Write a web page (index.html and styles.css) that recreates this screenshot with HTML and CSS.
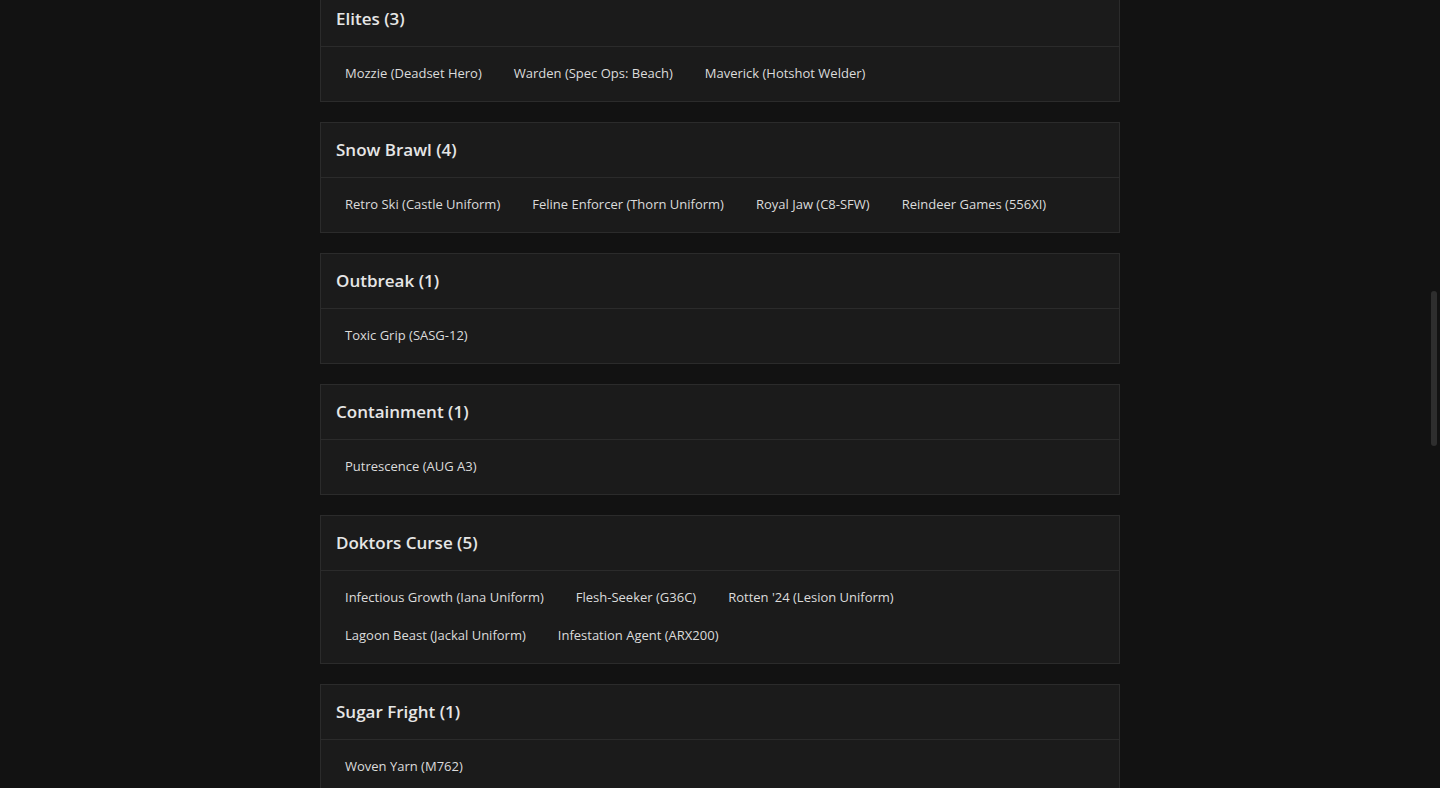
FILE: index.html
```html
<!DOCTYPE html>
<html lang="en">
<head>
<meta charset="utf-8">
<title>Events</title>
<link rel="stylesheet" href="styles.css">
</head>
<body>
<main class="list">
  <section class="card">
    <h2 class="card-title">Elites (3)</h2>
    <div class="card-body">
      <span class="item">Mozzie (Deadset Hero)</span>
      <span class="item">Warden (Spec Ops: Beach)</span>
      <span class="item">Maverick (Hotshot Welder)</span>
    </div>
  </section>
  <section class="card">
    <h2 class="card-title">Snow Brawl (4)</h2>
    <div class="card-body">
      <span class="item">Retro Ski (Castle Uniform)</span>
      <span class="item">Feline Enforcer (Thorn Uniform)</span>
      <span class="item">Royal Jaw (C8-SFW)</span>
      <span class="item">Reindeer Games (556XI)</span>
    </div>
  </section>
  <section class="card">
    <h2 class="card-title">Outbreak (1)</h2>
    <div class="card-body">
      <span class="item">Toxic Grip (SASG-12)</span>
    </div>
  </section>
  <section class="card">
    <h2 class="card-title">Containment (1)</h2>
    <div class="card-body">
      <span class="item">Putrescence (AUG A3)</span>
    </div>
  </section>
  <section class="card">
    <h2 class="card-title">Doktors Curse (5)</h2>
    <div class="card-body">
      <span class="item">Infectious Growth (Iana Uniform)</span>
      <span class="item">Flesh-Seeker (G36C)</span>
      <span class="item">Rotten '24 (Lesion Uniform)</span>
      <span class="item">Lagoon Beast (Jackal Uniform)</span>
      <span class="item">Infestation Agent (ARX200)</span>
    </div>
  </section>
  <section class="card">
    <h2 class="card-title">Sugar Fright (1)</h2>
    <div class="card-body">
      <span class="item">Woven Yarn (M762)</span>
    </div>
  </section>
</main>
<div class="scroll-thumb"></div>
</body>
</html>
```
FILE: styles.css
```css
html, body {
  margin: 0;
  padding: 0;
  background: #121212;
  height: 100%;
  overflow: hidden;
}
body {
  font-family: "Open Sans", "Liberation Sans", sans-serif;
  color: #e4e4e4;
}
.list {
  width: 800px;
  margin: -9px auto 0;
  display: flex;
  flex-direction: column;
  gap: 20px;
}
.card {
  background: #1b1b1b;
  border: 1px solid #2b2b2b;
}
.card-title {
  margin: 0;
  padding: 16px 15px;
  font-size: 17px;
  line-height: 22px;
  font-weight: 600;
  color: #e6e6e6;
  border-bottom: 1px solid #2b2b2b;
}
.card-body {
  display: flex;
  flex-wrap: wrap;
  column-gap: 16px;
  padding: 8px 16px;
}
.item {
  height: 36px;
  line-height: 36px;
  padding: 0 8px 2px;
  font-size: 13px;
  color: #dcdcdc;
}
.scroll-thumb {
  position: fixed;
  right: 3px;
  top: 291px;
  width: 6px;
  height: 155px;
  border-radius: 3px;
  background: #2e2e2e;
}
```
